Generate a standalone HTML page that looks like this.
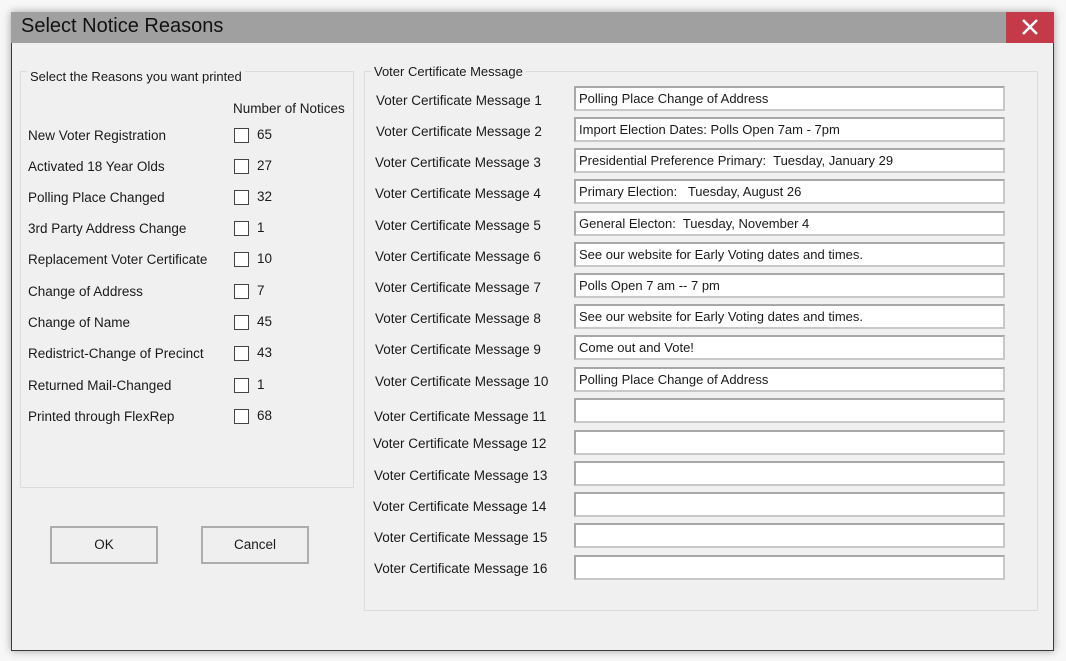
<!DOCTYPE html>
<html><head><style>
*{margin:0;padding:0;box-sizing:border-box}
body{width:1066px;height:661px;background:#f7f7f7;position:relative;overflow:hidden;font-family:"Liberation Sans",sans-serif;font-size:13.5px;color:#1a1a1a}
.win{position:absolute;left:11px;top:12px;width:1043px;height:639px;background:#f0f0f0;border:1px solid #3a3a3a;box-shadow:0 0 8px rgba(0,0,0,.35)}
.in{position:absolute;left:-1px;top:-1px;width:1043px;height:639px}
.title{position:absolute;left:0;top:0;width:100%;height:31px;background:#a0a0a0}
.title span{position:absolute;left:10px;top:3px;font-size:20px;color:#111}
.close{position:absolute;right:0;top:0;width:48px;height:31px;background:#c43a48}
.a{position:absolute;white-space:nowrap}
.grp{position:absolute;border:1px solid #dcdcdc}
.leg{position:absolute;background:#f0f0f0;padding:0 3px;white-space:nowrap;font-size:13px}
.cb{position:absolute;width:15px;height:15px;background:#fff;border:1px solid #444}
.tb{position:absolute;left:563px;width:431px;height:25px;background:#fff;border:2px solid #a8a8a8;border-right-color:#c8c8c8;border-bottom-color:#c8c8c8;padding:3px 0 0 3px;white-space:nowrap;font-size:13px}
.btn{position:absolute;width:108px;height:38px;border:2px solid #adadad;background:#efefef;text-align:center;line-height:34px}
</style></head><body>
<div class="win"><div class="in">
<div class="title"><span>Select Notice Reasons</span>
<div class="close"><svg width="48" height="31"><path d="M17 8 L31 22 M31 8 L17 22" stroke="#fff" stroke-width="2.5"/></svg></div></div>

<div class="grp" style="left:9px;top:59px;width:334px;height:417px"></div>
<div class="leg" style="left:16px;top:57px">Select the Reasons you want printed</div>
<div class="a" style="left:222px;top:89px">Number of Notices</div>

<div class="a" style="left:17px;top:116px">New Voter Registration</div><div class="cb" style="left:223px;top:116px"></div><div class="a" style="left:246px;top:115px">65</div>
<div class="a" style="left:17px;top:147px">Activated 18 Year Olds</div><div class="cb" style="left:223px;top:147px"></div><div class="a" style="left:246px;top:146px">27</div>
<div class="a" style="left:17px;top:178px">Polling Place Changed</div><div class="cb" style="left:223px;top:178px"></div><div class="a" style="left:246px;top:177px">32</div>
<div class="a" style="left:17px;top:209px">3rd Party Address Change</div><div class="cb" style="left:223px;top:209px"></div><div class="a" style="left:246px;top:208px">1</div>
<div class="a" style="left:17px;top:240px">Replacement Voter Certificate</div><div class="cb" style="left:223px;top:240px"></div><div class="a" style="left:246px;top:239px">10</div>
<div class="a" style="left:17px;top:272px">Change of Address</div><div class="cb" style="left:223px;top:272px"></div><div class="a" style="left:246px;top:271px">7</div>
<div class="a" style="left:17px;top:303px">Change of Name</div><div class="cb" style="left:223px;top:303px"></div><div class="a" style="left:246px;top:302px">45</div>
<div class="a" style="left:17px;top:334px">Redistrict-Change of Precinct</div><div class="cb" style="left:223px;top:334px"></div><div class="a" style="left:246px;top:333px">43</div>
<div class="a" style="left:17px;top:366px">Returned Mail-Changed</div><div class="cb" style="left:223px;top:366px"></div><div class="a" style="left:246px;top:365px">1</div>
<div class="a" style="left:17px;top:397px">Printed through FlexRep</div><div class="cb" style="left:223px;top:397px"></div><div class="a" style="left:246px;top:396px">68</div>

<div class="btn" style="left:39px;top:514px">OK</div>
<div class="btn" style="left:190px;top:514px">Cancel</div>

<div class="grp" style="left:353px;top:59px;width:674px;height:540px"></div>
<div class="leg" style="left:360px;top:52px">Voter Certificate Message</div>

<div class="a" style="left:365px;top:81px">Voter Certificate Message 1</div><div class="tb" style="top:74px">Polling Place Change of Address</div>
<div class="a" style="left:365px;top:112px">Voter Certificate Message 2</div><div class="tb" style="top:105px">Import Election Dates: Polls Open 7am - 7pm</div>
<div class="a" style="left:364px;top:143px">Voter Certificate Message 3</div><div class="tb" style="top:136px">Presidential Preference Primary:&nbsp; Tuesday, January 29</div>
<div class="a" style="left:364px;top:174px">Voter Certificate Message 4</div><div class="tb" style="top:167px">Primary Election:&nbsp;&nbsp; Tuesday, August 26</div>
<div class="a" style="left:364px;top:206px">Voter Certificate Message 5</div><div class="tb" style="top:199px">General Electon:&nbsp; Tuesday, November 4</div>
<div class="a" style="left:364px;top:237px">Voter Certificate Message 6</div><div class="tb" style="top:230px">See our website for Early Voting dates and times.</div>
<div class="a" style="left:364px;top:268px">Voter Certificate Message 7</div><div class="tb" style="top:261px">Polls Open 7 am -- 7 pm</div>
<div class="a" style="left:364px;top:299px">Voter Certificate Message 8</div><div class="tb" style="top:292px">See our website for Early Voting dates and times.</div>
<div class="a" style="left:364px;top:330px">Voter Certificate Message 9</div><div class="tb" style="top:323px">Come out and Vote!</div>
<div class="a" style="left:364px;top:362px">Voter Certificate Message 10</div><div class="tb" style="top:355px">Polling Place Change of Address</div>
<div class="a" style="left:363px;top:397px">Voter Certificate Message 11</div><div class="tb" style="top:386px"></div>
<div class="a" style="left:362px;top:424px">Voter Certificate Message 12</div><div class="tb" style="top:418px"></div>
<div class="a" style="left:363px;top:456px">Voter Certificate Message 13</div><div class="tb" style="top:449px"></div>
<div class="a" style="left:362px;top:487px">Voter Certificate Message 14</div><div class="tb" style="top:480px"></div>
<div class="a" style="left:363px;top:518px">Voter Certificate Message 15</div><div class="tb" style="top:511px"></div>
<div class="a" style="left:363px;top:549px">Voter Certificate Message 16</div><div class="tb" style="top:543px"></div>
</div></div>
</body></html>
